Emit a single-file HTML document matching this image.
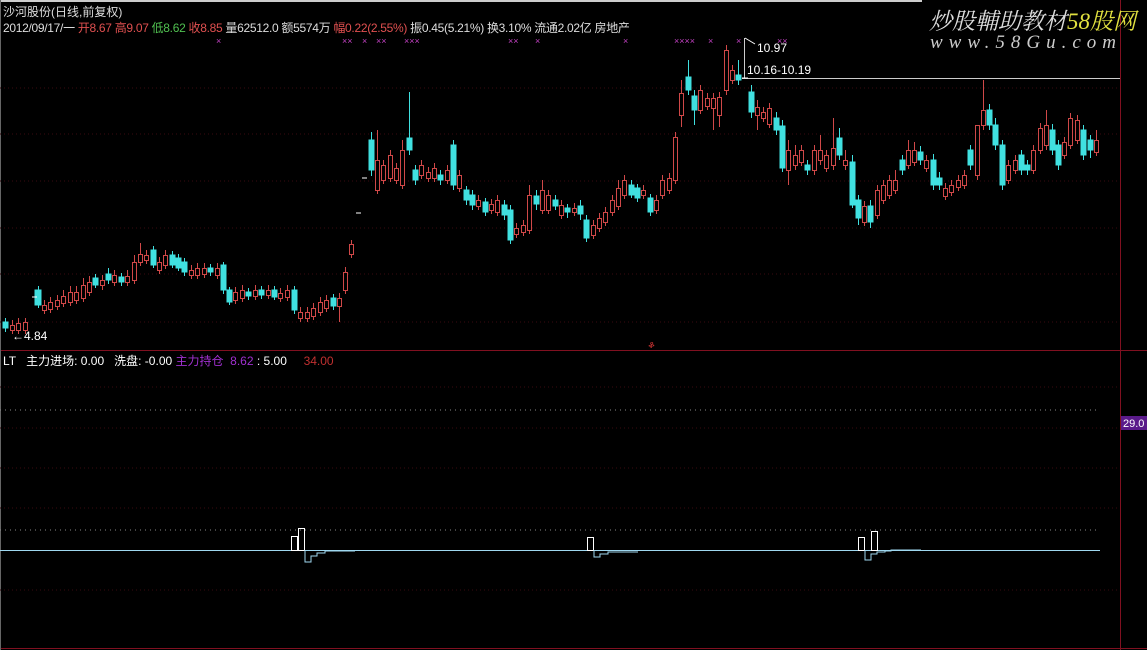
<!DOCTYPE html>
<html><head><meta charset="utf-8"><style>
body{margin:0;background:#000;width:1147px;height:650px;overflow:hidden;position:relative;font-family:"Liberation Sans","Noto Sans CJK SC",sans-serif;font-size:12px;color:#ddd}
.t{position:absolute;white-space:nowrap}
</style></head><body>
<svg width="1147" height="650" style="position:absolute;left:0;top:0">
<rect x="0" y="0" width="922" height="2" fill="#ccc"/>
<line x1="1120.5" y1="0" x2="1120.5" y2="650" stroke="#801020"/>
<line x1="0" y1="350.5" x2="1147" y2="350.5" stroke="#801020"/>
<line x1="0" y1="648.5" x2="1147" y2="648.5" stroke="#801020"/>
<line x1="0.5" y1="0" x2="0.5" y2="650" stroke="#666"/>
<g stroke="#3a0a10" stroke-dasharray="1,3">
<line x1="0" y1="88" x2="1120" y2="88"/><line x1="0" y1="134" x2="1120" y2="134"/><line x1="0" y1="181" x2="1120" y2="181"/><line x1="0" y1="228" x2="1120" y2="228"/><line x1="0" y1="274" x2="1120" y2="274"/><line x1="0" y1="322" x2="1120" y2="322"/>
<line x1="0" y1="387" x2="1120" y2="387"/><line x1="0" y1="428" x2="1120" y2="428"/><line x1="0" y1="468" x2="1120" y2="468"/><line x1="0" y1="508" x2="1120" y2="508"/><line x1="0" y1="590" x2="1120" y2="590"/>
</g>
<g stroke="#888" stroke-dasharray="1,4"><line x1="0" y1="410" x2="1100" y2="410"/><line x1="0" y1="530" x2="1100" y2="530"/></g>
<line x1="0" y1="550.5" x2="1100" y2="550.5" stroke="#9fd8f0"/>
<line x1="742" y1="78.5" x2="1120" y2="78.5" stroke="#ccc"/>
<line x1="744.5" y1="38" x2="744.5" y2="78" stroke="#ccc"/>
<g fill="none" stroke="#fff">
<rect x="291.5" y="536.5" width="6" height="14"/><rect x="298.5" y="528.5" width="6" height="22"/>
<rect x="587.5" y="537.5" width="6" height="13"/>
<rect x="858.5" y="537.5" width="6" height="13"/><rect x="871.5" y="531.5" width="6" height="19"/>
</g>
<g fill="none" stroke="#9fd8f0">
<path d="M305 550v12h6v-6h6v-3h8v-2h30"/><path d="M594 550v7h6v-3h8v-2h30"/><path d="M865 550v10h6v-6h6v-2h8v-1h6v-1h30"/>
</g>
<rect x="1121" y="416" width="26" height="14" fill="#5a1a8a"/>
<text x="1123" y="427" fill="#fff" font-size="11" font-family="Liberation Sans">29.0</text>

<!-- cyan candles -->
<g fill="#40e0e0" stroke="#40e0e0">
<path d="M5.5 318V332M38.5 286V308M95.5 274V288M108.5 268V284M121.5 273V286M153.5 246V268M172.5 251V268M178.5 254V271M184.5 258V276M210.5 264V276M223.5 262V294M229.5 287V305M248.5 288V300M261.5 286V299M274.5 286V300M294.5 286V314M333.5 294V310M371.5 132V176M409.5 92V155M415.5 165V185M440.5 170V185M453.5 140V190M466.5 186V205M472.5 190V210M485.5 198V216M504.5 200V220M510.5 205V244M536.5 190V210M555.5 195V210M567.5 204V218M580.5 200V220M586.5 215V242M631.5 180V198M637.5 184V202M650.5 194V216M688.5 60V95M694.5 90V125M738.5 60V85M751.5 85V118M776.5 112V135M782.5 120V172M807.5 160V175M839.5 128V160M852.5 155V208M858.5 195V225M870.5 200V228M902.5 155V175M920.5 146V165M933.5 154V190M939.5 172V190M970.5 145V170M989.5 104V130M995.5 118V150M1002.5 140V190M1021.5 150V175M1027.5 160V175M1052.5 124V155M1058.5 140V170M1083.5 125V160M1090.5 135V158"/>
<rect x="3" y="322" width="5" height="6"/><rect x="35" y="290" width="6" height="15"/><rect x="93" y="278" width="5" height="7"/><rect x="106" y="274" width="5" height="6"/><rect x="119" y="277" width="5" height="5"/><rect x="151" y="250" width="5" height="15"/><rect x="170" y="255" width="5" height="10"/><rect x="176" y="258" width="5" height="10"/><rect x="182" y="262" width="5" height="10"/><rect x="208" y="268" width="5" height="4"/><rect x="221" y="265" width="5" height="25"/><rect x="227" y="290" width="5" height="12"/><rect x="246" y="292" width="5" height="4"/><rect x="259" y="290" width="5" height="5"/><rect x="272" y="290" width="5" height="7"/><rect x="292" y="290" width="5" height="20"/><rect x="331" y="298" width="5" height="8"/><rect x="369" y="140" width="5" height="30"/><rect x="407" y="138" width="5" height="12"/><rect x="413" y="170" width="5" height="10"/><rect x="438" y="175" width="5" height="5"/><rect x="451" y="145" width="5" height="40"/><rect x="464" y="190" width="5" height="10"/><rect x="470" y="195" width="5" height="10"/><rect x="483" y="202" width="5" height="10"/><rect x="502" y="205" width="5" height="10"/><rect x="508" y="210" width="5" height="30"/><rect x="534" y="196" width="5" height="8"/><rect x="553" y="200" width="5" height="6"/><rect x="565" y="208" width="5" height="4"/><rect x="578" y="206" width="5" height="8"/><rect x="584" y="220" width="5" height="18"/><rect x="629" y="185" width="5" height="10"/><rect x="635" y="188" width="5" height="10"/><rect x="648" y="198" width="5" height="14"/><rect x="686" y="77" width="5" height="13"/><rect x="692" y="96" width="5" height="14"/><rect x="736" y="75" width="5" height="5"/><rect x="749" y="92" width="5" height="20"/><rect x="774" y="118" width="5" height="12"/><rect x="780" y="126" width="5" height="42"/><rect x="805" y="165" width="5" height="5"/><rect x="837" y="138" width="5" height="17"/><rect x="850" y="162" width="5" height="43"/><rect x="856" y="200" width="5" height="18"/><rect x="868" y="206" width="5" height="16"/><rect x="900" y="160" width="5" height="10"/><rect x="918" y="152" width="5" height="8"/><rect x="931" y="160" width="5" height="25"/><rect x="937" y="178" width="5" height="7"/><rect x="968" y="150" width="5" height="15"/><rect x="987" y="110" width="5" height="15"/><rect x="993" y="125" width="5" height="20"/><rect x="1000" y="145" width="5" height="40"/><rect x="1019" y="155" width="5" height="15"/><rect x="1025" y="165" width="5" height="5"/><rect x="1050" y="130" width="5" height="20"/><rect x="1056" y="145" width="5" height="20"/><rect x="1081" y="130" width="5" height="25"/><rect x="1088" y="140" width="5" height="10"/>
</g>
<!-- red hollow candles -->
<g fill="#000" stroke="#d04848">
<path d="M12.5 320V334M18.5 318V334M25.5 318V334M44.5 300V314M50.5 297V313M57.5 295V310M63.5 290V307M70.5 286V306M76.5 286V304M83.5 278V302M89.5 276V296M102.5 275V290M114.5 270V286M127.5 270V286M134.5 255V284M140.5 243V266M146.5 250V264M159.5 257V274M165.5 250V269M191.5 265V279M197.5 263V279M204.5 263V278M217.5 263V279M235.5 287V304M242.5 285V302M255.5 285V300M268.5 285V299M280.5 288V302M287.5 285V301M300.5 307V322M307.5 307V322M313.5 303V320M320.5 297V316M326.5 295V312M339.5 293V322M345.5 267V294M351.5 240V258M377.5 130V194M383.5 160V184M390.5 150V182M396.5 163V184M402.5 140V189M421.5 160V179M428.5 167V182M434.5 163V182M447.5 165V184M459.5 170V192M478.5 195V210M491.5 199V214M497.5 195V216M516.5 223V238M523.5 220V236M529.5 185V234M542.5 180V214M548.5 190V214M561.5 200V219M574.5 203V216M593.5 220V239M599.5 213V232M605.5 207V226M612.5 195V216M618.5 180V210M624.5 175V199M643.5 185V199M656.5 195V214M662.5 175V199M669.5 173V194M675.5 132V184M681.5 80V127M700.5 85V114M707.5 93V110M713.5 93V130M719.5 92V127M726.5 45V95M732.5 65V84M757.5 100V130M763.5 107V122M769.5 103V128M788.5 140V185M795.5 145V170M801.5 145V166M814.5 145V175M820.5 135V165M826.5 150V172M833.5 118V170M845.5 150V170M864.5 201V226M877.5 185V219M883.5 180V204M889.5 175V199M895.5 170V194M908.5 140V169M914.5 142V166M926.5 155V172M945.5 183V200M951.5 180V196M958.5 175V191M964.5 170V189M977.5 125V180M983.5 80V130M1008.5 160V184M1015.5 155V174M1033.5 145V174M1040.5 123V154M1046.5 110V150M1064.5 137V159M1070.5 113V149M1077.5 115V144M1096.5 130V156"/>
<rect x="10.5" y="325.5" width="4" height="5"/><rect x="16.5" y="323.5" width="4" height="7"/><rect x="23.5" y="322.5" width="4" height="8"/><rect x="42.5" y="305.5" width="4" height="5"/><rect x="48.5" y="302.5" width="4" height="7"/><rect x="55.5" y="300.5" width="4" height="6"/><rect x="61.5" y="296.5" width="4" height="7"/><rect x="68.5" y="292.5" width="4" height="10"/><rect x="74.5" y="292.5" width="4" height="8"/><rect x="81.5" y="285.5" width="4" height="13"/><rect x="87.5" y="282.5" width="4" height="10"/><rect x="100.5" y="280.5" width="4" height="5"/><rect x="112.5" y="275.5" width="4" height="7"/><rect x="125.5" y="276.5" width="4" height="6"/><rect x="132.5" y="262.5" width="4" height="18"/><rect x="138.5" y="254.5" width="4" height="8"/><rect x="144.5" y="255.5" width="4" height="5"/><rect x="157.5" y="262.5" width="4" height="8"/><rect x="163.5" y="255.5" width="4" height="10"/><rect x="189.5" y="270.5" width="4" height="5"/><rect x="195.5" y="268.5" width="4" height="7"/><rect x="202.5" y="268.5" width="4" height="6"/><rect x="215.5" y="268.5" width="4" height="7"/><rect x="233.5" y="292.5" width="4" height="8"/><rect x="240.5" y="290.5" width="4" height="8"/><rect x="253.5" y="290.5" width="4" height="6"/><rect x="266.5" y="290.5" width="4" height="5"/><rect x="278.5" y="293.5" width="4" height="5"/><rect x="285.5" y="290.5" width="4" height="7"/><rect x="298.5" y="312.5" width="4" height="6"/><rect x="305.5" y="312.5" width="4" height="6"/><rect x="311.5" y="308.5" width="4" height="8"/><rect x="318.5" y="302.5" width="4" height="10"/><rect x="324.5" y="300.5" width="4" height="8"/><rect x="337.5" y="298.5" width="4" height="8"/><rect x="343.5" y="272.5" width="4" height="18"/><rect x="349.5" y="244.5" width="4" height="10"/><rect x="375.5" y="160.5" width="4" height="30"/><rect x="381.5" y="165.5" width="4" height="15"/><rect x="388.5" y="155.5" width="4" height="23"/><rect x="394.5" y="168.5" width="4" height="12"/><rect x="400.5" y="150.5" width="4" height="35"/><rect x="419.5" y="165.5" width="4" height="10"/><rect x="426.5" y="172.5" width="4" height="6"/><rect x="432.5" y="168.5" width="4" height="10"/><rect x="445.5" y="170.5" width="4" height="10"/><rect x="457.5" y="175.5" width="4" height="13"/><rect x="476.5" y="200.5" width="4" height="6"/><rect x="489.5" y="204.5" width="4" height="6"/><rect x="495.5" y="200.5" width="4" height="12"/><rect x="514.5" y="228.5" width="4" height="6"/><rect x="521.5" y="225.5" width="4" height="7"/><rect x="527.5" y="195.5" width="4" height="35"/><rect x="540.5" y="190.5" width="4" height="20"/><rect x="546.5" y="195.5" width="4" height="15"/><rect x="559.5" y="205.5" width="4" height="10"/><rect x="572.5" y="208.5" width="4" height="4"/><rect x="591.5" y="225.5" width="4" height="10"/><rect x="597.5" y="218.5" width="4" height="10"/><rect x="603.5" y="212.5" width="4" height="10"/><rect x="610.5" y="200.5" width="4" height="12"/><rect x="616.5" y="188.5" width="4" height="18"/><rect x="622.5" y="180.5" width="4" height="15"/><rect x="641.5" y="190.5" width="4" height="5"/><rect x="654.5" y="200.5" width="4" height="10"/><rect x="660.5" y="180.5" width="4" height="15"/><rect x="667.5" y="178.5" width="4" height="12"/><rect x="673.5" y="137.5" width="4" height="43"/><rect x="679.5" y="93.5" width="4" height="22"/><rect x="698.5" y="90.5" width="4" height="20"/><rect x="705.5" y="98.5" width="4" height="8"/><rect x="711.5" y="98.5" width="4" height="10"/><rect x="717.5" y="97.5" width="4" height="18"/><rect x="724.5" y="50.5" width="4" height="40"/><rect x="730.5" y="70.5" width="4" height="10"/><rect x="755.5" y="107.5" width="4" height="8"/><rect x="761.5" y="112.5" width="4" height="6"/><rect x="767.5" y="108.5" width="4" height="16"/><rect x="786.5" y="150.5" width="4" height="20"/><rect x="793.5" y="155.5" width="4" height="10"/><rect x="799.5" y="150.5" width="4" height="12"/><rect x="812.5" y="150.5" width="4" height="20"/><rect x="818.5" y="150.5" width="4" height="10"/><rect x="824.5" y="155.5" width="4" height="13"/><rect x="831.5" y="148.5" width="4" height="17"/><rect x="843.5" y="160.5" width="4" height="5"/><rect x="862.5" y="206.5" width="4" height="16"/><rect x="875.5" y="190.5" width="4" height="25"/><rect x="881.5" y="185.5" width="4" height="15"/><rect x="887.5" y="180.5" width="4" height="15"/><rect x="893.5" y="180.5" width="4" height="10"/><rect x="906.5" y="150.5" width="4" height="15"/><rect x="912.5" y="150.5" width="4" height="12"/><rect x="924.5" y="160.5" width="4" height="8"/><rect x="943.5" y="188.5" width="4" height="8"/><rect x="949.5" y="185.5" width="4" height="7"/><rect x="956.5" y="180.5" width="4" height="7"/><rect x="962.5" y="175.5" width="4" height="10"/><rect x="975.5" y="125.5" width="4" height="50"/><rect x="981.5" y="110.5" width="4" height="15"/><rect x="1006.5" y="165.5" width="4" height="15"/><rect x="1013.5" y="160.5" width="4" height="10"/><rect x="1031.5" y="150.5" width="4" height="20"/><rect x="1038.5" y="128.5" width="4" height="22"/><rect x="1044.5" y="125.5" width="4" height="20"/><rect x="1062.5" y="142.5" width="4" height="13"/><rect x="1068.5" y="118.5" width="4" height="27"/><rect x="1075.5" y="120.5" width="4" height="20"/><rect x="1094.5" y="140.5" width="4" height="12"/>
</g>
<g stroke="#fff"><path d="M32 297h5M356 213h5M362 178h5M742 78h6"/></g>
<g fill="#c040c0" font-size="9" font-family="Liberation Sans">
<text x="216" y="44">×</text><text x="342" y="44">××</text><text x="362" y="44">×</text><text x="376" y="44">××</text><text x="404" y="44">×××</text><text x="508" y="44">××</text><text x="535" y="44">×</text><text x="623" y="44">×</text><text x="674" y="44">××××</text><text x="708" y="44">×</text><text x="736" y="44">×</text><text x="777" y="44">××</text>
</g>
<path d="M745 38l10 6" stroke="#fff" fill="none"/>
<text x="648" y="348" fill="#c03030" font-size="10">ቆ</text>
</svg>
<div class="t" style="left:3px;top:3px">沙河股份(日线,前复权)</div>
<div class="t" style="left:3px;top:19px;letter-spacing:-0.3px"><span style="color:#ddd">2012/09/17/一 </span><span style="color:#e05050">开8.67 高9.07 </span><span style="color:#50c050">低8.62 </span><span style="color:#e05050">收8.85 </span><span>量62512.0 额5574万 </span><span style="color:#e05050">幅0.22(2.55%) </span><span>振0.45(5.21%) 换3.10% 流通2.02亿 房地产</span></div>
<div class="t" style="left:929px;top:3px;font-size:23px;font-style:italic;color:#ddd;font-family:'Liberation Serif','Noto Serif CJK SC',serif">炒股輔助教材<span style="color:#e0e040">58股网</span></div>
<div class="t" style="left:930px;top:32px;font-size:19px;font-style:italic;color:#ccc;letter-spacing:6px;font-family:'Liberation Serif',serif">www.58Gu.com</div>
<div class="t" style="left:757px;top:41px;color:#fff">10.97</div>
<div class="t" style="left:747px;top:63px;color:#fff">10.16-10.19</div>
<div class="t" style="left:12px;top:329px;color:#fff">←4.84</div>
<div class="t" style="left:3px;top:352px"><span style="color:#fff">LT&nbsp;&nbsp; 主力进场: 0.00&nbsp;&nbsp; 洗盘: -0.00 </span><span style="color:#a030d0">主力持仓&nbsp; 8.62</span><span style="color:#fff"> : 5.00&nbsp;&nbsp;&nbsp;&nbsp; </span><span style="color:#c03030">34.00</span></div>
</body></html>
